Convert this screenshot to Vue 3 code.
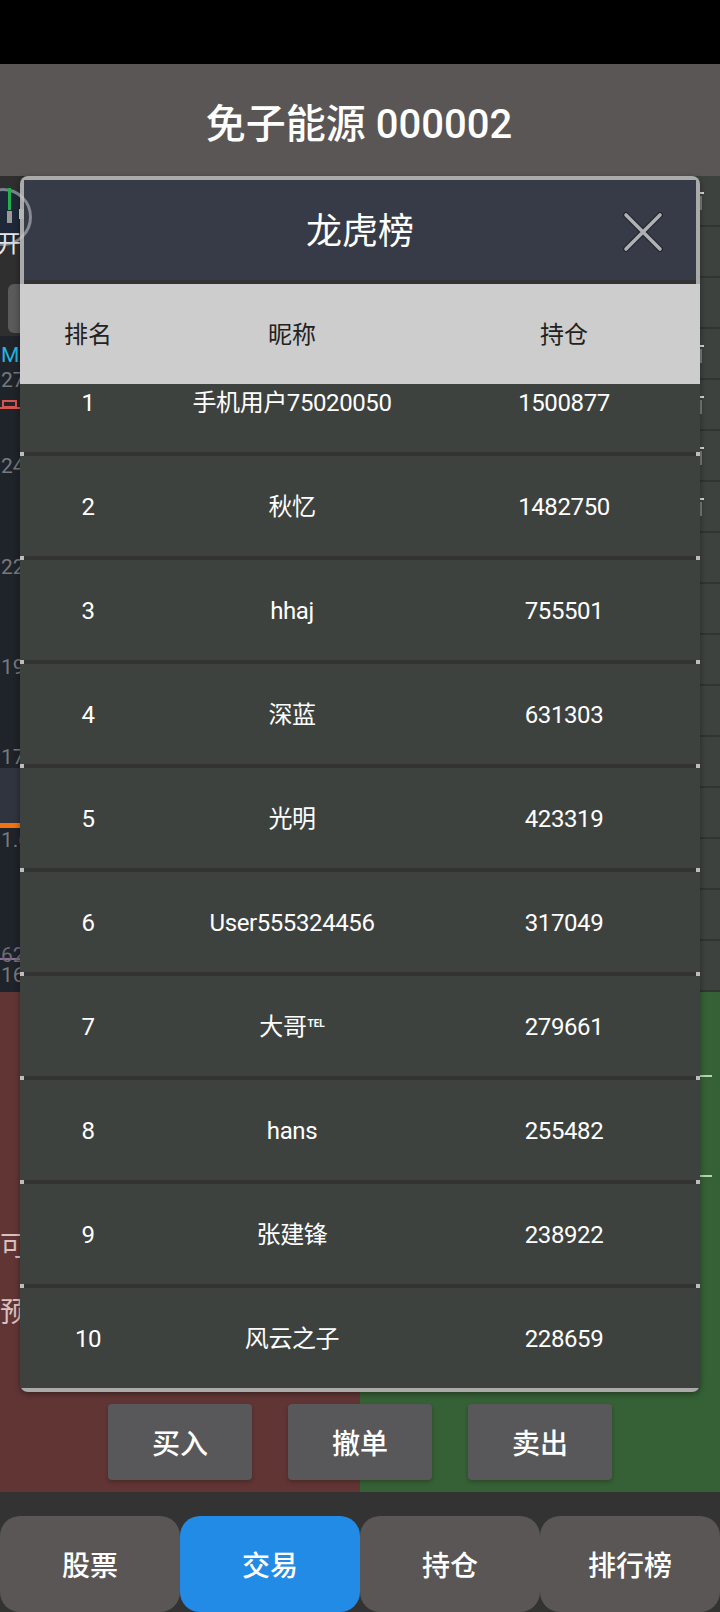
<script setup>
const rows = [
  { rank: 1, name: '手机用户75020050', hold: 1500877 },
  { rank: 2, name: '秋忆', hold: 1482750 },
  { rank: 3, name: 'hhaj', hold: 755501 },
  { rank: 4, name: '深蓝', hold: 631303 },
  { rank: 5, name: '光明', hold: 423319 },
  { rank: 6, name: 'User555324456', hold: 317049 },
  { rank: 7, name: '大哥', sup: 'TEL', hold: 279661 },
  { rank: 8, name: 'hans', hold: 255482 },
  { rank: 9, name: '张建锋', hold: 238922 },
  { rank: 10, name: '风云之子', hold: 228659 },
]
const bookTicks = [0, 3, 4, 5, 6]
const book = Array.from({ length: 16 }, (_, i) => ({ id: i, tick: bookTicks.includes(i) }))
const axis = [
  { text: 'MA', top: 345, cls: 'ma' },
  { text: '27', top: 370 },
  { text: '24', top: 456 },
  { text: '22', top: 557 },
  { text: '19', top: 657 },
  { text: '17', top: 747 },
  { text: '1.6', top: 830 },
  { text: '62', top: 945, cls: 'struck' },
  { text: '16', top: 965 },
]
const tabs = ['股票', '交易', '持仓', '排行榜']
const actions = ['买入', '撤单', '卖出']
</script>

<template>
  <div class="page">
    <div class="status"></div>
    <header class="title">免子能源 000002</header>

    <section class="market">
      <div class="chart">
        <div class="toolbar">
          <div class="badge"></div>
          <span class="open">开</span>
          <span class="tool-btn"></span>
        </div>
        <div class="canvas">
          <span class="band"></span>
          <span class="orange"></span>
          <span class="red-box"></span>
          <span class="red-line"></span>
          <span class="purple"></span>
        </div>
        <span
          v-for="a in axis"
          :key="a.text"
          class="axis"
          :class="a.cls"
          :style="{ top: a.top - 176 + 'px' }"
        >{{ a.text }}</span>
      </div>
      <div class="book">
        <div v-for="b in book" :key="b.id" class="book-row">
          <template v-if="b.tick">
            <span class="tick"></span>
            <span class="stroke"></span>
          </template>
        </div>
      </div>
    </section>

    <section class="trade">
      <div class="fields">
        <div class="labels">
          <span class="label">可</span>
          <span class="label second">预</span>
        </div>
        <div class="marks">
          <span class="mark"></span>
          <span class="mark lower"></span>
        </div>
      </div>
      <div class="actions">
        <button v-for="a in actions" :key="a" class="action">{{ a }}</button>
      </div>
    </section>

    <div class="gap"></div>

    <nav class="tabs">
      <button v-for="(t, i) in tabs" :key="t" class="tab" :class="{ active: i === 1 }">{{ t }}</button>
    </nav>

    <div class="modal">
      <div class="modal-head">
        <span class="modal-title">龙虎榜</span>
        <svg class="close" viewBox="0 0 40 40" width="40" height="40">
          <path d="M3 3 L37 37 M37 3 L3 37" stroke="#23262c" stroke-width="6" stroke-linecap="round" fill="none" />
          <path d="M3 3 L37 37 M37 3 L3 37" stroke="#aeb0b6" stroke-width="3.6" stroke-linecap="round" fill="none" />
        </svg>
      </div>
      <div class="thead">
        <span>排名</span>
        <span>昵称</span>
        <span>持仓</span>
      </div>
      <div class="list">
        <div class="list-inner">
          <template v-for="(r, i) in rows" :key="r.rank">
            <div class="row">
              <span>{{ r.rank }}</span>
              <span>{{ r.name }}<sup v-if="r.sup" class="sup">{{ r.sup }}</sup></span>
              <span>{{ r.hold }}</span>
            </div>
            <div v-if="i < rows.length - 1" class="sep"></div>
          </template>
        </div>
      </div>
    </div>

    <div class="ring">
      <span class="wick"></span>
      <span class="candle c1"></span>
      <span class="candle c2"></span>
    </div>
  </div>
</template>

<style scoped>
.page {
  position: relative;
  width: 720px;
  height: 1612px;
  display: flex;
  flex-direction: column;
  overflow: hidden;
  background: #333;
  font-family: Roboto, "Noto Sans CJK SC", sans-serif;
  color: #fff;
}
.status {
  height: 64px;
  background: #000;
}
.title {
  height: 112px;
  background: #5a5655;
  display: flex;
  align-items: center;
  justify-content: center;
  font-size: 40px;
  font-weight: 500;
  padding: 2px 2px 0 0;
  box-sizing: border-box;
}
.market {
  height: 816px;
  display: flex;
}
.chart {
  position: relative;
  flex: 1;
  display: flex;
  flex-direction: column;
  overflow: hidden;
}
.toolbar {
  position: relative;
  height: 160px;
  background: #2f2f2f;
}
.badge {
  position: absolute;
  left: -26px;
  top: 12px;
  width: 58px;
  height: 58px;
  border-radius: 50%;
  background: #1e2838;
}
.open {
  position: absolute;
  left: -3px;
  top: 54px;
  font-size: 24px;
  line-height: 28px;
  color: #e8e8e8;
}
.tool-btn {
  position: absolute;
  left: 8px;
  top: 108px;
  width: 60px;
  height: 49px;
  border-radius: 6px;
  background: #5a5a5a;
}
.canvas {
  position: relative;
  flex: 1;
  background: #1f232a;
}
.band {
  position: absolute;
  left: 0;
  right: 0;
  top: 432px;
  height: 56px;
  background: #30343f;
}
.orange {
  position: absolute;
  left: 0;
  right: 0;
  top: 487px;
  height: 5px;
  background: #f2720f;
}
.red-box {
  position: absolute;
  left: 2px;
  top: 64px;
  width: 15px;
  height: 8px;
  box-sizing: border-box;
  border: 2px solid #d9544f;
}
.red-line {
  position: absolute;
  left: 0;
  right: 0;
  top: 71px;
  height: 2px;
  background: #d9544f;
}
.purple {
  position: absolute;
  left: 0;
  right: 0;
  top: 622px;
  height: 2px;
  background: #8a6f95;
}
.axis {
  position: absolute;
  left: 1px;
  font-size: 21px;
  line-height: 20px;
  color: #77797c;
}
.axis.ma { color: #27b4e0; }
.axis.struck { color: #6f6b78; }
.book {
  flex: 1;
  display: flex;
  flex-direction: column;
  background: #3e423f;
}
.book-row {
  position: relative;
  height: 51px;
  box-sizing: border-box;
  border-bottom: 2px solid #333;
}
.tick {
  position: absolute;
  right: 16px;
  top: 16px;
  width: 4px;
  height: 2px;
  background: #d8d8d8;
}
.stroke {
  position: absolute;
  right: 18px;
  top: 20px;
  width: 2px;
  height: 14px;
  background: #7c7f7c;
}
.trade {
  height: 500px;
  display: flex;
  flex-direction: column;
  background: linear-gradient(90deg, #623535 50%, #366136 50%);
}
.fields {
  flex: 1;
  display: flex;
  justify-content: space-between;
}
.labels {
  display: flex;
  flex-direction: column;
  padding-top: 239px;
}
.label {
  font-size: 28px;
  line-height: 32px;
  color: #dcc0c0;
}
.label.second {
  margin-top: 34px;
}
.marks {
  width: 20px;
  display: flex;
  flex-direction: column;
  padding-top: 83px;
}
.mark {
  width: 12px;
  height: 2px;
  background: #b7d3b7;
}
.mark.lower {
  margin-top: 98px;
}
.actions {
  display: flex;
  justify-content: center;
  gap: 36px;
  padding-bottom: 12px;
}
.action {
  width: 144px;
  height: 76px;
  border: 0;
  border-radius: 4px;
  background: #58585a;
  color: #fff;
  font: 500 28px Roboto, "Noto Sans CJK SC", sans-serif;
  box-shadow: 0 2px 4px rgba(0, 0, 0, 0.25);
}
.gap {
  height: 24px;
  background: #333;
}
.tabs {
  display: flex;
  flex: 1;
}
.tab {
  flex: 1;
  border: 0;
  border-radius: 20px;
  background: #5a5655;
  color: #fff;
  font: 500 28px Roboto, "Noto Sans CJK SC", sans-serif;
}
.tab.active {
  background: #228be6;
}
.modal {
  position: absolute;
  left: 20px;
  top: 176px;
  width: 680px;
  height: 1216px;
  box-sizing: border-box;
  padding: 4px 0;
  display: flex;
  flex-direction: column;
  background: #a9aaa9;
  border-radius: 8px;
  box-shadow: 0 2px 6px rgba(0, 0, 0, 0.4);
  z-index: 2;
}
.modal-head {
  position: relative;
  height: 104px;
  margin: 0 4px;
  box-sizing: border-box;
  border-bottom: 4px solid #333;
  background: #363b47;
  display: flex;
  align-items: center;
  justify-content: center;
}
.modal-title {
  font-size: 36px;
  line-height: 40px;
  padding-top: 3px;
}
.close {
  position: absolute;
  right: 33px;
  top: 32px;
}
.thead,
.row {
  display: grid;
  grid-template-columns: 20% 40% 40%;
  align-items: center;
  justify-items: center;
  font-size: 24px;
  line-height: 28px;
  box-sizing: border-box;
  padding-top: 2px;
}
.thead {
  height: 100px;
  background: #cdcdcd;
  color: #222;
}
.list {
  flex: 1;
  overflow: hidden;
}
.list-inner {
  margin-top: -32px;
}
.row {
  height: 100px;
  background: #3e423f;
  letter-spacing: -0.4px;
}
.sup {
  font-size: 10px;
  font-weight: 700;
  letter-spacing: 0;
  line-height: 0;
  vertical-align: 8px;
  margin-left: 1px;
}
.sep {
  height: 4px;
  box-sizing: border-box;
  background: #333;
  border-left: 4px solid #bdbdbd;
  border-right: 4px solid #bdbdbd;
}
.ring {
  position: absolute;
  left: -26px;
  top: 188px;
  width: 58px;
  height: 58px;
  box-sizing: border-box;
  border-radius: 50%;
  border: 3px solid rgba(200, 204, 210, 0.55);
  z-index: 3;
}
.wick {
  position: absolute;
  left: 31px;
  top: -3px;
  width: 3px;
  height: 22px;
  background: #22b04a;
}
.candle {
  position: absolute;
  top: 20px;
  width: 5px;
  height: 12px;
  background: #9a9a9a;
}
.c1 { left: 30px; }
.c2 { left: 42px; top: 18px; height: 10px; background: #b5b5b5; }
</style>
